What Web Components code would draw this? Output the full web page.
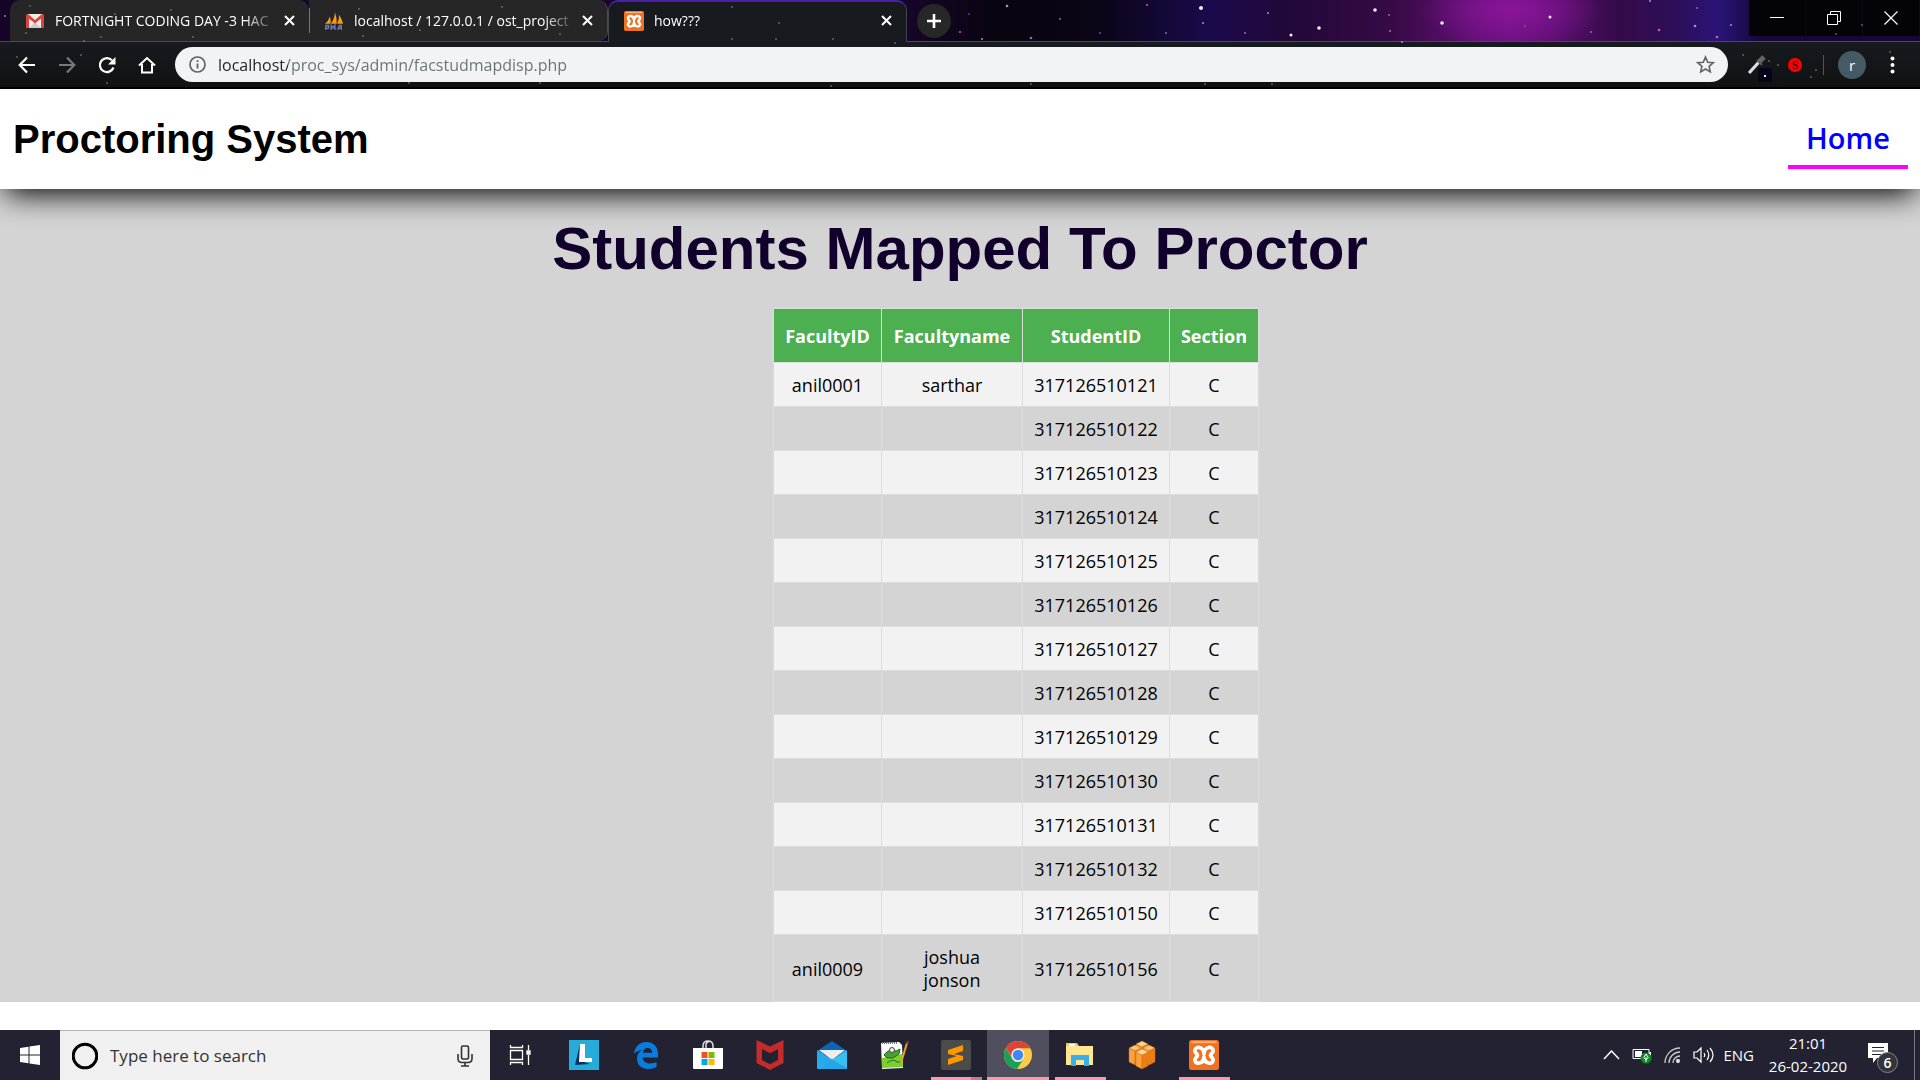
<!DOCTYPE html>
<html lang="en">
<head>
<meta charset="utf-8">
<title>how???</title>
<style>
  html, body { margin: 0; height: 100%; }
  body { display: flex; flex-direction: column; overflow: hidden; background: #fff; font-family: "Open Sans", "Noto Sans", sans-serif; }
  page-view { flex: 1; min-height: 0; }
</style>
</head>
<body>
<browser-chrome>
  <browser-tab slot="tabs" label="FORTNIGHT CODING DAY -3 HAC" icon="gmail"></browser-tab>
  <browser-tab slot="tabs" label="localhost / 127.0.0.1 / ost_project" icon="pma" divided></browser-tab>
  <browser-tab slot="tabs" label="how???" icon="xampp" active></browser-tab>
  <address-bar slot="toolbar"></address-bar>
</browser-chrome>
<page-view>
  <site-header slot="header">Proctoring System<a slot="nav" href="#home">Home</a></site-header>
  <span slot="title">Students Mapped To Proctor</span>
  <proctor-table></proctor-table>
</page-view>
<task-bar>
  <task-item icon="lenovo" label="Lenovo"></task-item>
  <task-item icon="edge" label="Edge"></task-item>
  <task-item icon="store" label="Store"></task-item>
  <task-item icon="mcafee" label="McAfee"></task-item>
  <task-item icon="mail" label="Mail"></task-item>
  <task-item icon="notepad" label="Notepad++"></task-item>
  <task-item icon="sublime" label="Sublime Text" running stacked></task-item>
  <task-item icon="chrome" label="Chrome" running active></task-item>
  <task-item icon="explorer" label="File Explorer" running></task-item>
  <task-item icon="boxes" label="VMware"></task-item>
  <task-item icon="xampp" label="XAMPP" running></task-item>
  <system-tray slot="tray"></system-tray>
</task-bar>

<script>
const ICONS = {
  gmail: `<svg viewBox="0 0 20 20"><path fill="#eee" d="M2 3h16v14H2z"/><path fill="#ccc" d="M4 17l6-6 6 6z"/><path fill="#db4437" d="M1 4.500Q1 3 2.500 3H3l7 6 7-6h.5Q19 3 19 4.500V17h-3V7.500l-6 5-6-5V17H1z"/></svg>`,
  pma: `<svg viewBox="0 0 22 22"><path fill="#f89c0e" d="M1 14Q5 11 6.500 6Q8 11 7 14zM7.500 14Q12 8 12 1Q14.500 8 14 14zM14.500 14Q17 9 16.500 4Q20 9 21 14z"/><path fill="none" stroke="#6c78af" stroke-width="1.600" d="M2 21v-5h3v3H2M8 21v-5l2 2.500 2-2.500v5M15 21l2-5h2v5M15 19h4"/></svg>`,
  xampp: `<svg viewBox="0 0 24 24"><rect width="24" height="24" rx="2" fill="#f0711f"/><path d="M2 1h20v1.500H2z" fill="#ffb37d"/><path fill="none" stroke="#fff" stroke-width="3" stroke-linejoin="round" d="M12 10.800C11.500 5 5 4.600 4.700 8.500C4.700 10.500 6.800 11 6.800 12.200C6.800 13.400 4.700 14 4.700 16C5 19.800 11.500 19.400 12 13.800C12.500 19.400 19 19.800 19.300 16C19.300 14 17.200 13.400 17.200 12.200C17.200 11 19.300 10.500 19.300 8.500C19 4.600 12.500 5 12 10.800Z"/><path stroke="#fff" stroke-width="2" d="M11 12.300h2"/></svg>`,
  lenovo: `<svg viewBox="0 0 30 30"><path fill="#27acd9" d="M0 0h30v30H0z"/><path fill="#0b2f66" d="M11 4L6 25l15-1-9-3z"/><path fill="#fff" d="M11 4h5v14h7v4H10z"/></svg>`,
  edge: `<svg viewBox="0 0 30 30"><path fill="#0a7ce0" d="M3 14C4 6 9 2 15.500 2C23 2 27 7 27 14v3.500H11.500C12 22 16 23.500 19 23.500c3 0 5-.7 6.500-1.700v5.200C23.500 28.300 20.500 29 17.500 29C10 29 6 24.500 6 18.500C6 14.500 8 11.500 11 10C8 10.300 5 11.500 3 14zm8.800-1.200h9.400C21 9.500 19.500 8 16.800 8c-2.800 0-4.600 2-5 4.800z"/></svg>`,
  store: `<svg viewBox="0 0 30 30"><path fill="none" stroke="#ddd" stroke-width="1.500" d="M10 9V6q0-5 5-5t5 5v3M13 9V5q0-3 3.500-3.500"/><path fill="#fff" d="M0 8h30v20q0 1-1 1H1q-1 0-1-1z"/><path fill="#f25022" d="M8.500 12h6v6h-6z"/><path fill="#7fba00" d="M15.500 12h6v6h-6z"/><path fill="#00a4ef" d="M8.500 19h6v6h-6z"/><path fill="#ffb900" d="M15.500 19h6v6h-6z"/></svg>`,
  mcafee: `<svg viewBox="0 0 30 30"><path fill="#c42b2b" fill-rule="evenodd" d="M1.500 0l13.500 6.500L28.500 0v23L15 30 1.500 23zM7 9v11l8 4.300 8-4.300V9l-8 4.300z"/></svg>`,
  mail: `<svg viewBox="0 0 30 30"><path fill="#0b66b8" d="M0 11L15 1l15 10v3H0z"/><path fill="#eee" d="M2 10h26L15 20z"/><path fill="#27a9ee" d="M0 10l30 19H1q-1 0-1-1z"/><path fill="#38c0f5" d="M30 10v19H1L15 19.500z"/><path fill="#1a94e0" d="M15 19.500L30 28v1H2z" opacity=".6"/></svg>`,
  notepad: `<svg viewBox="0 0 30 30"><path fill="#fff" d="M2 3l18-1 3 3 1 23-21 1z"/><path fill="#7bd02d" d="M3 18l20-4 1 13-21 1z"/><path fill="none" stroke="#777" stroke-dasharray="1 1" stroke-width="2" d="M3 3h15"/><path fill="#4aa02c" stroke="#263" d="M5 15q5-7 12-4l4-2-1 5-6 4H8z"/><circle cx="13" cy="10" r="2.500" fill="#eee" stroke="#444"/><path d="M8 23q6-5 10-1l3 0" fill="none" stroke="#263"/><path stroke="#e6a41e" stroke-width="2" d="M28 3l-6 20"/><path stroke="#a33" stroke-width="2" d="M29 1l-1 3"/></svg>`,
  sublime: `<svg viewBox="0 0 30 30"><rect width="30" height="30" rx="2" fill="#4b4b4b"/><path fill="#ff9800" d="M7 10l15-5v6l-9 3 9 2v4L7 25v-6l9-3-9-2z"/></svg>`,
  chrome: `<svg viewBox="0 0 30 30"><circle cx="15" cy="15" r="14" fill="#fbcb43"/><path fill="#dc4437" d="M2.900 8A14 14 0 0 1 27.200 8.300H15A6.500 6.500 0 0 0 9 17.500z"/><path fill="#18a05e" d="M2.900 8A14 14 0 0 0 14 29l6.500-10a6.500 6.500 0 0 1-11.500-.8z"/><circle cx="15" cy="15" r="6.600" fill="#f1f1f1"/><circle cx="15" cy="15" r="5.200" fill="#4285f4"/></svg>`,
  explorer: `<svg viewBox="0 0 30 30"><path fill="#f3c64c" d="M1 3h11l2 3h-3v8H1z"/><path fill="#fff" d="M4 4h6v2H4z"/><path fill="#ffe692" d="M1 6h27v19H1z"/><path fill="#3aaee6" d="M6 26V15h18v11h-5v-6h-8v6z"/></svg>`,
  boxes: `<svg viewBox="0 0 30 30"><g stroke="#c96512" stroke-width=".4"><path fill="#f9a33a" d="M9 4v20l6 4V7z"/><path fill="#ef7d12" d="M21 4v20l-6 4V7z"/><path fill="#ffd08a" d="M15 1l6 3-6 3-6-3z"/><path fill="#f9a33a" d="M2 8l6 3v14l-6-3z"/><path fill="#ef7d12" d="M14 8v14l-6 3V11z"/><path fill="#ffc26e" d="M8 5l6 3-6 3-6-3z"/><path fill="#f9a33a" d="M16 8l6 3v14l-6-3z"/><path fill="#ef7d12" d="M28 8v14l-6 3V11z"/><path fill="#ffc26e" d="M22 5l6 3-6 3-6-3z"/><path fill="#f9a33a" d="M9 12l6 3v14l-6-3z"/><path fill="#ef7d12" d="M21 12v14l-6 3V15z"/><path fill="#ffd9a0" d="M15 9l6 3-6 3-6-3z"/></g></svg>`
};

const BASE = `<style>
  :host, *, *::before, *::after { box-sizing: border-box; }
  button { border: 0; margin: 0; padding: 0; background: none; color: inherit; font: inherit; display: flex; align-items: center; justify-content: center; }
  svg { display: block; }
</style>`;

class BaseElement extends HTMLElement {
  connectedCallback() {
    if (this.shadowRoot) return;
    this.attachShadow({ mode: 'open' }).innerHTML = BASE + this.render();
  }
}

class BrowserChrome extends BaseElement {
  render() {
    const bright = [[1007,6,1.3],[1031,38,1.3],[960,32,1],[982,39,1],[1201,8,2],[1291,35,1.5],[1319,28,1.800],[1375,10,1.800],[1390,31,1],[1402,42,1],[1442,23,1.800],[1366,49,1.700],[1550,17,1.500],[1591,32,1],[1659,30,1.300],[1695,26,1.300],[1697,8,1],[1717,37,1.300],[1731,25,1],[1060,19,1],[1147,5,1],[1203,23,1],[1166,33,1],[5,16,1],[1268,13,1],[1389,15,1],[1245,33,1],[1100,33,.8],[969,14,.8],[1525,26,.8],[1650,1,1]];
    const dim = [[30,6],[26,33],[101,37],[193,37],[171,10],[115,14],[84,41],[359,9],[363,36],[502,7],[500,20],[420,30],[560,34],[732,7],[779,23],[732,39],[776,39],[833,39],[895,43],[771,54],[622,49],[982,57],[1134,54],[107,83],[81,55],[17,57],[409,83],[540,83],[831,86],[1205,84],[1031,84],[1272,84],[1348,55],[1530,57],[1669,55],[1743,55],[1769,61],[1778,65],[1811,77],[1816,70],[1862,25],[1836,34],[1890,52]];
    return `<style>
      :host { display: block; flex: none; background: #15181b; color: #fff; border-bottom: 2px solid #000; }
      .stars { position: absolute; inset: 0; width: 100%; height: 89px; pointer-events: none; }
      .strip { display: flex; height: 42px; padding-left: 10px; border-bottom: 1px solid #4b4b4f;
        background: radial-gradient(ellipse 90px 40px at 1511px 10px, #8a159a, transparent),
          linear-gradient(90deg, #160428, #1a0630 880px, #08040f 1000px, #0b0518 1100px, #1a0a4c 1210px, #220838 1290px, #360a45 1390px, #5c0f70 1470px, #6a1180 1511px, #560f6a 1560px, #330a48 1620px, #2d0f5c 1680px, #2a1478 1720px, #150838 1760px); }
      .tabs { display: flex; flex: none; }
      .new { width: 34px; height: 34px; border-radius: 17px; background: #272727; margin: 4px 0 0 10px; }
      .window { display: flex; height: 36px; margin-left: auto; }
      .window button { width: 57px; background: #030308; border-right: 1px solid #0a0a1c; }
      .toolbar { display: block; height: 45px; background: linear-gradient(#171a1e, #101214); }
    </style>
    <div class="strip">
      <div class="tabs"><slot name="tabs"></slot></div>
      <button class="new" aria-label="New tab"><svg width="16" height="16"><path d="M8 1v14M1 8h14" stroke="#fff" stroke-width="2.600"/></svg></button>
      <div class="window">
        <button aria-label="Minimize"><svg width="14" height="14"><path d="M0 6.500h14" stroke="#fff"/></svg></button>
        <button aria-label="Restore"><svg width="14" height="14" fill="none" stroke="#fff"><path d="M.5 3.500h10v10H.5zM3.500 3V.500h10v10H11"/></svg></button>
        <button aria-label="Close"><svg width="14" height="14"><path d="M.5.5l13 13M13.500.500l-13 13" stroke="#fff" stroke-width="1.200"/></svg></button>
      </div>
    </div>
    <div class="toolbar"><slot name="toolbar"></slot></div>
    <svg class="stars">${bright.map(([x,y,r],i)=>`<circle cx="${x}" cy="${y}" r="${r}" fill="${r>1.4?'#fbeaff':['#a48cf0','#9a5cd8','#d85a9a'][i%3]}"/>`).join('')}${dim.map(([x,y])=>`<circle cx="${x}" cy="${y}" r="1.100" fill="#8e98a4" opacity=".55"/>`).join('')}</svg>`;
  }
}

class BrowserTab extends BaseElement {
  render() {
    return `<style>
      :host { display: flex; align-items: center; width: 299px; height: 41px; padding: 0 10px 0 15px; background: #262626; border-radius: 10px 10px 0 0; font-size: 14px; }
      :host([divided]) { border-right: 1px solid #4b4b4f; border-radius: 0 10px 10px 0; }
      :host([divided])::before { content: ""; width: 1px; height: 25px; margin-left: -15px; margin-right: 14px; background: #777; }
      :host([active]) { height: 42px; padding-bottom: 3px; background: #171a1f; border: 1px solid #45454a; border-top: 2px solid #4b1fa8; border-bottom: 0; }
      .icon { width: 20px; height: 20px; flex: none; }
      .label { flex: 1; min-width: 0; white-space: nowrap; margin-left: 10px; line-height: 20px; -webkit-mask: linear-gradient(90deg, #000 190px, transparent 222px); }
      button { flex: none; width: 20px; height: 20px; margin-left: 7px; }
    </style>
    <span class="icon">${ICONS[this.getAttribute('icon')]}</span>
    <span class="label">${this.getAttribute('label')}</span>
    <button aria-label="Close tab"><svg width="11" height="11"><path d="M1 1l9 9M10 1l-9 9" stroke="#fff" stroke-width="2"/></svg></button>`;
  }
}

class AddressBar extends BaseElement {
  render() {
    return `<style>
      :host { display: flex; align-items: center; height: 45px; padding: 0 18px 0 11px; }
      .nav { width: 32px; height: 32px; margin-right: 8px; }
      .box { position: relative; z-index: 1; flex: 1; display: flex; align-items: center; height: 35px; border-radius: 18px; background: #f1f3f4; padding: 0 13px 0 14px; margin-left: 4px; }
      input { flex: 1; min-width: 0; border: 0; outline: 0; padding: 0; margin-left: 12px; height: 26px; font: 16px "Open Sans", sans-serif; color: #5f6368;
        background: linear-gradient(90deg, #202124 70px, #6b7074 70px); -webkit-background-clip: text; background-clip: text; -webkit-text-fill-color: transparent; }
      .ext { display: flex; align-items: center; margin-left: 14px; }
      .drop { position: relative; width: 30px; height: 30px; }
      .drop i { position: absolute; right: 0; bottom: -2px; width: 14px; height: 14px; border-radius: 2px; background: #07051a; }
      .drop i::after { content: ""; display: block; width: 2px; height: 2px; margin: 7px 0 0 6px; background: #eee; }
      .s { width: 14px; height: 14px; border-radius: 7px; background: #f00; color: #300; font: bold 12px/14px "Liberation Serif", serif; margin-left: 16px; }
      .sep { width: 1px; height: 20px; background: #555; margin-left: 21px; }
      .me { width: 28px; height: 28px; border-radius: 14px; background: #455a64; color: #fff; font-size: 15px; margin-left: 14px; }
      .menu { width: 20px; height: 30px; margin-left: 16px; }
    </style>
    <button class="nav" aria-label="Back"><svg width="18" height="18" fill="none" stroke="#fff" stroke-width="2.200"><path d="M17 9H2M9 1.500L1.700 9 9 16.500"/></svg></button>
    <button class="nav" aria-label="Forward"><svg width="18" height="18" fill="none" stroke="#77797b" stroke-width="2.200"><path d="M1 9h15M9 1.500L16.300 9 9 16.500"/></svg></button>
    <button class="nav" aria-label="Reload"><svg width="18" height="18"><path d="M15.500 11.500A7 7 0 1 1 14 4.200" fill="none" stroke="#fff" stroke-width="2.200"/><path d="M17.500 1v7.500H10z" fill="#fff"/></svg></button>
    <button class="nav" aria-label="Home page"><svg width="18" height="18" fill="none" stroke="#fff" stroke-width="2"><path d="M1 9.500L9 2l8 7.500M4 8v8.500h10V8"/></svg></button>
    <div class="box">
      <svg width="17" height="17"><circle cx="8.500" cy="8.500" r="7.500" fill="none" stroke="#5f6368" stroke-width="1.700"/><path d="M8.500 7.500v5M8.500 4.300v1.800" stroke="#5f6368" stroke-width="1.800"/></svg>
      <input aria-label="Address" value="localhost/proc_sys/admin/facstudmapdisp.php">
      <button aria-label="Bookmark"><svg width="19" height="19"><path d="M9.500 2l2.200 5.200 5.600.5-4.200 3.700 1.200 5.500-4.800-2.900-4.800 2.900 1.200-5.500L1.700 7.700l5.600-.5z" fill="none" stroke="#5f6368" stroke-width="1.600"/></svg></button>
    </div>
    <div class="ext">
      <button class="drop" aria-label="Colour picker"><svg width="20" height="20"><path d="M2 18l10-11" stroke="#ddd" stroke-width="3.200"/><path d="M10 5l5 5" stroke="#555" stroke-width="2"/><path d="M12 7l5-5" stroke="#666" stroke-width="5"/></svg><i></i></button>
      <button class="s" aria-label="Extension">S</button>
      <span class="sep"></span>
      <button class="me">r</button>
      <button class="menu" aria-label="Menu"><svg width="5" height="20" fill="#fff"><circle cx="2.500" cy="3.500" r="2"/><circle cx="2.500" cy="10" r="2"/><circle cx="2.500" cy="16.500" r="2"/></svg></button>
    </div>`;
  }
}

class PageView extends BaseElement {
  render() {
    return `<style>
      :host { display: block; background: #fff; overflow: hidden; }
      main { background: #d4d4d4; padding-top: 26px; display: flex; flex-direction: column; }
      h2 { margin: 0 0 26px; font: bold 60px/67px "Liberation Sans", Arial, sans-serif; color: #10002b; text-align: center; }
      .table { display: flex; justify-content: center; margin-left: 112px; }
    </style>
    <slot name="header"></slot>
    <main><h2><slot name="title"></slot></h2><div class="table"><slot></slot></div></main>`;
  }
}

class SiteHeader extends BaseElement {
  render() {
    return `<style>
      :host { position: relative; display: flex; align-items: center; justify-content: space-between; height: 100px; padding: 0 12px 0 13px; background: #fff; box-shadow: 0 10px 30px -5px #000; }
      h1 { margin: 0; font: bold 40px/46px "Liberation Sans", Arial, sans-serif; color: #000; }
      ::slotted(a) { display: block; box-sizing: border-box; width: 120px; height: 60px; padding-top: 2px; text-align: center; font: 600 29px/54px "Open Sans", sans-serif; color: #00f; text-decoration: none; border-bottom: 4px solid #f0f; }
    </style>
    <h1><slot></slot></h1><nav><slot name="nav"></slot></nav>`;
  }
}

class ProctorTable extends BaseElement {
  render() {
    const ids = [121,122,123,124,125,126,127,128,129,130,131,132,150,156];
    const names = { 121: ['anil0001', 'sarthar'], 156: ['anil0009', 'joshua<br>jonson'] };
    return `<style>
      :host { display: block; }
      table { border-collapse: collapse; table-layout: fixed; width: 486px; font: 18px/23px "Open Sans", sans-serif; color: #000; text-align: center; }
      th, td { border: 1px solid #ddd; padding: 11px 0 9px; }
      th { background: #4caf50; color: #fff; padding: 16px 0 14px; font-weight: bold; }
      td { height: 44px; }
      tbody tr:nth-child(odd) { background: #f2f2f2; }
    </style>
    <table>
      <colgroup><col style="width:108px"><col style="width:141px"><col style="width:147px"><col></colgroup>
      <thead><tr><th>FacultyID</th><th>Facultyname</th><th>StudentID</th><th>Section</th></tr></thead>
      <tbody>${ids.map(id => `<tr><td>${(names[id]||[''])[0]}</td><td>${(names[id]||['',''])[1]}</td><td>317126510${id}</td><td>C</td></tr>`).join('')}</tbody>
    </table>`;
  }
}

class TaskBar extends BaseElement {
  render() {
    return `<style>
      :host { display: flex; flex: none; height: 50px; background: #222233; color: #fff; }
      .start { width: 60px; }
      .search { display: flex; align-items: center; width: 430px; padding: 0 16px 0 12px; background: #f0f0f0; border-top: 1px solid #b5b5b5; }
      input { flex: 1; min-width: 0; border: 0; outline: 0; padding: 0; margin-left: 12px; background: none; font: 17px "Open Sans", sans-serif; color: #333; }
      input::placeholder { color: #333; opacity: 1; }
      .view { width: 63px; padding-right: 4px; }
      .tray { margin-left: auto; display: flex; }
    </style>
    <button class="start" aria-label="Start"><svg width="20" height="20" fill="#fff"><path d="M0 3l8.500-1.200v7.700H0zM9.500 1.600L20 0v9.500H9.500zM0 10.500h8.500v7.700L0 17zM9.500 10.500H20V20L9.500 18.400z"/></svg></button>
    <label class="search">
      <svg width="26" height="28"><circle cx="13" cy="14" r="11.800" fill="none" stroke="#000" stroke-width="3"/></svg>
      <input type="text" aria-label="Search" placeholder="Type here to search">
      <svg width="18" height="22" fill="none" stroke="#333" stroke-width="1.600"><rect x="5.500" y="1" width="7" height="13" rx="1.500"/><path d="M2 9v4.500q0 4 4 4h6q4 0 4-4V9M9 17.500V21M5 21h8"/></svg>
    </label>
    <button class="view" aria-label="Task view"><svg width="22" height="20" fill="none" stroke="#fff" stroke-width="1.300"><path d="M1.500 5.500h12v9h-12zM1.500 0v2.500h12V0M1.500 20v-2.500h12V20M19.500 0v5M19.500 10v10"/><path d="M18 6h3v3h-3z" fill="#fff"/></svg></button>
    <slot></slot>
    <div class="tray"><slot name="tray"></slot></div>`;
  }
}

class TaskItem extends BaseElement {
  render() {
    return `<style>
      :host { display: flex; flex-direction: column; width: 62px; height: 50px; }
      :host([active]) { background: #4f4f5d; }
      button { flex: 1; width: 100%; padding-top: 3px; }
      button svg { width: 30px; height: 30px; }
      .bar { height: 3px; margin: 0 5px 0 6px; }
      :host([running]) .bar { background: #ff98a4; }
      :host([stacked]) .bar { background: linear-gradient(90deg, #ff98a4 40px, #c67b88 40px); }
      :host([active]) .bar { margin: 0; }
    </style>
    <button aria-label="${this.getAttribute('label')}">${ICONS[this.getAttribute('icon')]}</button><span class="bar"></span>`;
  }
}

class SystemTray extends BaseElement {
  render() {
    return `<style>
      :host { display: flex; align-items: center; height: 50px; font-size: 15px; line-height: 23px; }
      .gap { margin-left: 12px; }
      .lang { margin-left: 8px; }
      .clock { width: 84px; text-align: center; margin-left: 12px; }
      .note { position: relative; width: 30px; height: 30px; margin-left: 18px; }
      .note svg { position: absolute; left: 0; top: 3px; }
      .badge { position: absolute; left: 9px; top: 12px; width: 21px; height: 21px; border: 1px solid #888; border-radius: 11px; background: #34343c; font-size: 14px; line-height: 19px; text-align: center; font-weight: 600; }
      .desk { width: 6px; height: 50px; border-left: 1px solid #777786; margin-left: 16px; }
    </style>
    <button aria-label="Hidden icons"><svg width="17" height="10" fill="none" stroke="#fff" stroke-width="1.500"><path d="M1 9l7.500-8L16 9"/></svg></button>
    <svg class="gap" width="20" height="18"><path d="M1 3.500h16v9H1z" fill="none" stroke="#fff"/><path d="M3 5h7v6H3zM17 6h2v4h-2z" fill="#fff"/><circle cx="14" cy="12" r="5.500" fill="#0d8a24"/><path d="M14 16v-5M14 8l-2.200 3.500L14 14l2.200-2.500z" stroke="#fff" fill="none"/></svg>
    <svg class="gap" width="17" height="17" fill="none" stroke="#ccc" stroke-width="1.300"><path d="M1 16A15 15 0 0 1 16 1M5 16A11 11 0 0 1 16 5M9 16a7 7 0 0 1 7-7"/><circle cx="14" cy="14" r="1.500" fill="#fff"/></svg>
    <svg class="gap" width="22" height="18" fill="none" stroke="#fff" stroke-width="1.200"><path d="M1 6h3l4-4v14l-4-4H1zM11 7q1.500 2 0 4M14 4q3.500 5 0 10M17 2q6 7 0 14"/></svg>
    <span class="lang">ENG</span>
    <div class="clock"><div>21:01</div><div>26-02-2020</div></div>
    <button class="note" aria-label="Notifications"><svg width="20" height="21"><path d="M0 0h20v15H9l-4 5v-5H0z" fill="#fff"/><path d="M4 4.500h12M4 8h12M4 11.500h9" stroke="#223"/></svg><span class="badge">6</span></button>
    <span class="desk"></span>`;
  }
}

customElements.define('browser-tab', BrowserTab);
customElements.define('address-bar', AddressBar);
customElements.define('browser-chrome', BrowserChrome);
customElements.define('site-header', SiteHeader);
customElements.define('proctor-table', ProctorTable);
customElements.define('page-view', PageView);
customElements.define('task-item', TaskItem);
customElements.define('system-tray', SystemTray);
customElements.define('task-bar', TaskBar);
</script>
</body>
</html>
